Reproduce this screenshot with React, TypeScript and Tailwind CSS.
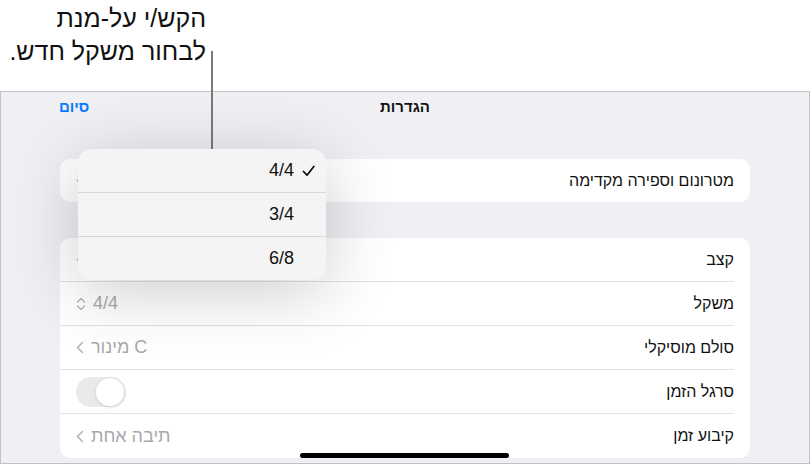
import React from "react";

const Chevron = () => (
  <svg width="8" height="13" viewBox="0 0 8 13" className="shrink-0">
    <path d="M6.5 1.5 L1.5 6.5 L6.5 11.5" fill="none" stroke="#b4b4b8" strokeWidth="1.6" strokeLinecap="round" strokeLinejoin="round" />
  </svg>
);

const UpDown = () => (
  <svg width="10" height="14" viewBox="0 0 10 14" className="shrink-0">
    <path d="M1.5 5 L5 1.5 L8.5 5" fill="none" stroke="#b4b4b8" strokeWidth="1.4" strokeLinecap="round" strokeLinejoin="round" />
    <path d="M1.5 9 L5 12.5 L8.5 9" fill="none" stroke="#b4b4b8" strokeWidth="1.4" strokeLinecap="round" strokeLinejoin="round" />
  </svg>
);

const Check = () => (
  <svg width="13" height="12" viewBox="0 0 13 12" className="shrink-0">
    <path d="M1.5 6.5 L5 10.2 L11.8 1.5" fill="none" stroke="#111" strokeWidth="1.8" strokeLinecap="round" strokeLinejoin="round" />
  </svg>
);

function Row({ label, children, last }: { label: string; children?: React.ReactNode; last?: boolean }) {
  return (
    <div className="flex h-[44px] pr-[16px]">
      <div
        className={
          "flex flex-1 items-center justify-between pl-[16px] " +
          (last ? "" : "border-b border-[#e2e2e4]")
        }
      >
        <span className="text-[16px] text-[#111]">{label}</span>
        <div className="flex items-center gap-[7px] text-[18px] text-[#a9a9ad]">{children}</div>
      </div>
    </div>
  );
}

export default function App() {
  return (
    <div
      className="relative h-[466px] w-[811px] overflow-hidden bg-white"
      style={{ fontFamily: '"Liberation Sans", Arial, sans-serif' }}
    >
      {/* callout */}
      <div className="h-[91px] pt-[2px]">
        <div dir="rtl" className="w-[206px] text-right text-[25px] leading-[33px] text-[#111]">
          <div>הקש/י על-מנת</div>
          <div>לבחור משקל חדש.</div>
        </div>
      </div>

      {/* device frame */}
      <div className="h-[373px] w-[810px] border border-[#c2c2c4] bg-[#efeff4]" dir="rtl">
        <div className="grid h-[30px] grid-cols-3 items-center px-[58px]">
          <div />
          <div className="text-center text-[15px] font-bold text-[#111]">הגדרות</div>
          <div className="text-left text-[15px] font-bold text-[#0a7aff]">סיום</div>
        </div>

        <div className="px-[59px]">
          <div className="mt-[37px] overflow-hidden rounded-[10px] bg-white">
            <div className="flex h-[43px] items-center justify-between pl-[16px] pr-[16px]">
              <span className="text-[16px] text-[#111]">מטרונום וספירה מקדימה</span>
              <Chevron />
            </div>
          </div>

          <div className="mt-[36px] overflow-hidden rounded-[10px] bg-white">
            <Row label="קצב">
              <Chevron />
            </Row>
            <Row label="משקל">
              <span>4/4</span>
              <UpDown />
            </Row>
            <Row label="סולם מוסיקלי">
              <span>C מינור</span>
              <Chevron />
            </Row>
            <Row label="סרגל הזמן">
              <div className="flex h-[30px] w-[50px] items-center justify-start rounded-full bg-[#e8e8ea] p-[2px] opacity-90">
                <div className="h-[28px] w-[28px] rounded-full bg-white shadow-[0_1px_3px_rgba(0,0,0,0.2)] ring-1 ring-[#dcdcde]" />
              </div>
            </Row>
            <Row label="קיבוע זמן" last>
              <span>תיבה אחת</span>
              <Chevron />
            </Row>
          </div>
        </div>
      </div>

      {/* leader line */}
      <div className="absolute left-[211px] top-[51px] h-[98px] w-[2px] bg-[#7a7a7a]" />

      {/* popup menu */}
      <div
        dir="rtl"
        className="absolute left-[78px] top-[149px] w-[248px] overflow-hidden rounded-[13px] bg-[#f4f4f4] shadow-[0_12px_70px_rgba(0,0,0,0.2)]"
      >
        {[
          { t: "4/4", c: true },
          { t: "3/4", c: false },
          { t: "6/8", c: false },
        ].map((it, i) => (
          <div
            key={it.t}
            className={
              "flex items-center gap-[8px] pr-[11px] " +
              (i < 2 ? "h-[44px] border-b border-[#d8d8da]" : "h-[43px]")
            }
          >
            <div className="flex w-[13px] justify-center">{it.c ? <Check /> : null}</div>
            <span className="text-[18px] text-[#111]">{it.t}</span>
          </div>
        ))}
      </div>

      {/* home indicator */}
      <div className="absolute left-[300px] top-[453px] h-[5px] w-[209px] rounded-full bg-black" />
    </div>
  );
}
